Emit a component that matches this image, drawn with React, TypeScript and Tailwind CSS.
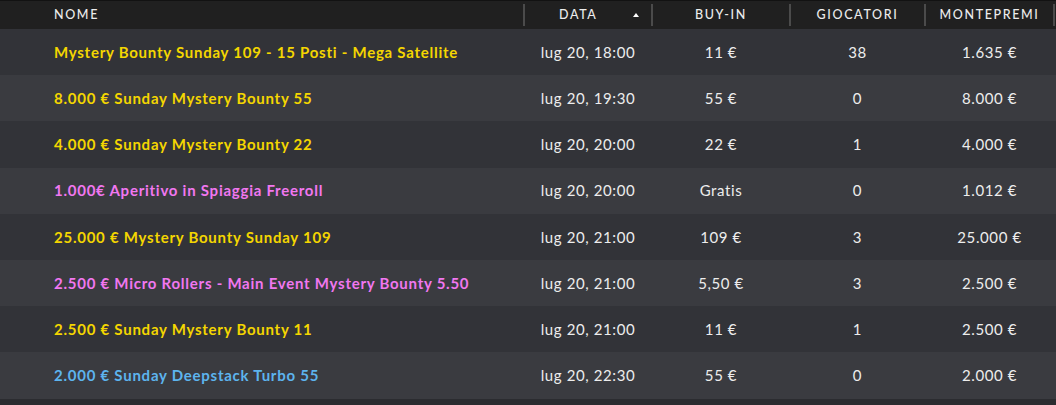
import React from 'react';

type Row = {
  name: string;
  color: 'yellow' | 'pink' | 'blue';
  date: string;
  buyIn: string;
  players: string;
  prize: string;
};

const ROWS: Row[] = [
  { name: 'Mystery Bounty Sunday 109 - 15 Posti - Mega Satellite', color: 'yellow', date: 'lug 20, 18:00', buyIn: '11 €', players: '38', prize: '1.635 €' },
  { name: '8.000 € Sunday Mystery Bounty 55', color: 'yellow', date: 'lug 20, 19:30', buyIn: '55 €', players: '0', prize: '8.000 €' },
  { name: '4.000 € Sunday Mystery Bounty 22', color: 'yellow', date: 'lug 20, 20:00', buyIn: '22 €', players: '1', prize: '4.000 €' },
  { name: '1.000€ Aperitivo in Spiaggia Freeroll', color: 'pink', date: 'lug 20, 20:00', buyIn: 'Gratis', players: '0', prize: '1.012 €' },
  { name: '25.000 € Mystery Bounty Sunday 109', color: 'yellow', date: 'lug 20, 21:00', buyIn: '109 €', players: '3', prize: '25.000 €' },
  { name: '2.500 € Micro Rollers - Main Event Mystery Bounty 5.50', color: 'pink', date: 'lug 20, 21:00', buyIn: '5,50 €', players: '3', prize: '2.500 €' },
  { name: '2.500 € Sunday Mystery Bounty 11', color: 'yellow', date: 'lug 20, 21:00', buyIn: '11 €', players: '1', prize: '2.500 €' },
  { name: '2.000 € Sunday Deepstack Turbo 55', color: 'blue', date: 'lug 20, 22:30', buyIn: '55 €', players: '0', prize: '2.000 €' },
];

const nameColor = {
  yellow: 'text-[#f4d600]',
  pink: 'text-[#f177f0]',
  blue: 'text-[#5db4ee]',
};

const Divider = () => <div className="h-[22px] w-[2px] bg-[#4b4b4b]" />;

const HeaderCell = ({ children, className }: { children: React.ReactNode; className: string }) => (
  <div className={`flex items-center text-[12.5px] font-medium tracking-[0.13em] text-[#ececec] ${className}`}>
    {children}
  </div>
);

export default function App() {
  return (
    <div className="h-[405px] w-[1056px] bg-[#2b2c30] font-['Lato',sans-serif]">
      <div className="h-[1px] bg-[#121212]" />
      <div className="flex h-[28px] items-center bg-[#202020]">
        <HeaderCell className="w-[523px] pl-[54px]">NOME</HeaderCell>
        <Divider />
        <HeaderCell className="w-[126px] justify-between pl-[34px] pr-[12px]">
          <span>DATA</span>
          <span className="h-0 w-0 border-x-[3.5px] border-b-[4px] border-x-transparent border-b-white" />
        </HeaderCell>
        <Divider />
        <HeaderCell className="w-[136px] justify-center">BUY-IN</HeaderCell>
        <Divider />
        <HeaderCell className="w-[133px] justify-center">GIOCATORI</HeaderCell>
        <Divider />
        <HeaderCell className="w-[127px] justify-center">MONTEPREMI</HeaderCell>
        <Divider />
      </div>
      {ROWS.map((row, i) => (
        <div
          key={i}
          className={`flex h-[46.2px] items-center text-[15px] tracking-[0.04em] text-[#ededed] ${i % 2 === 0 ? 'bg-[#323338]' : 'bg-[#3a3b40]'}`}
        >
          <div className={`w-[523px] pl-[54px] font-bold tracking-[0.05em] ${nameColor[row.color]}`}>{row.name}</div>
          <div className="w-[2px]" />
          <div className="w-[126px] text-center">{row.date}</div>
          <div className="w-[2px]" />
          <div className="w-[136px] text-center">{row.buyIn}</div>
          <div className="w-[2px]" />
          <div className="w-[133px] text-center">{row.players}</div>
          <div className="w-[2px]" />
          <div className="w-[127px] text-center">{row.prize}</div>
        </div>
      ))}
    </div>
  );
}
